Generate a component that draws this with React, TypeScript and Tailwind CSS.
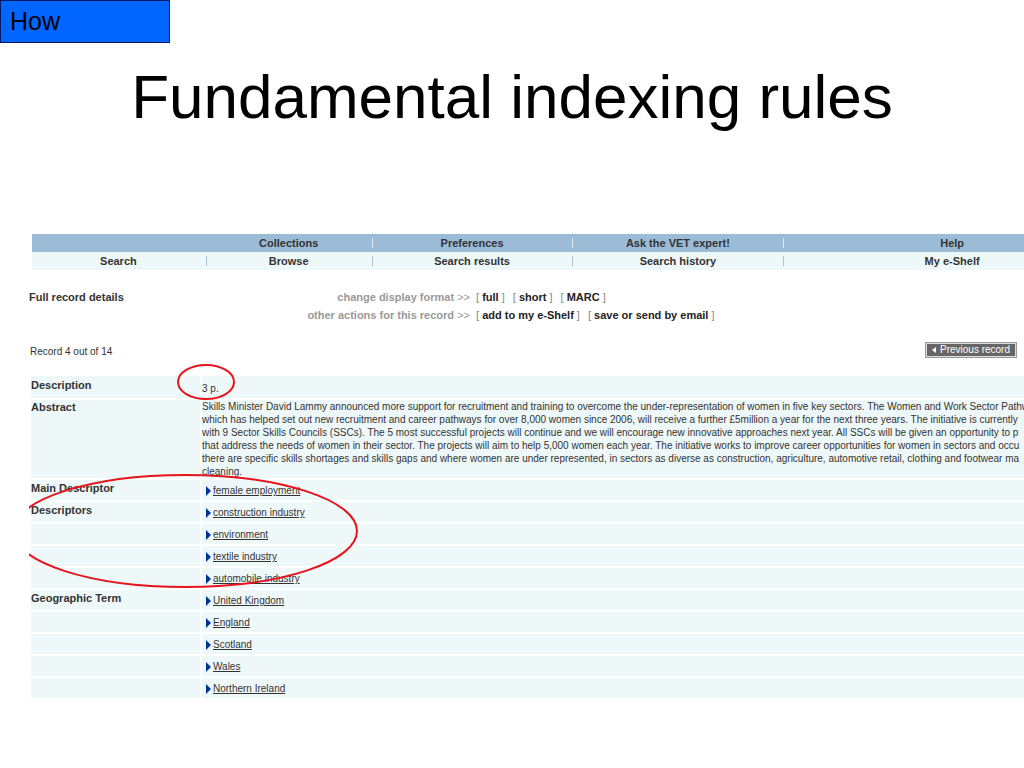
import { Fragment } from 'react';

const topNav = ['', 'Collections', 'Preferences', 'Ask the VET expert!', 'Help'];
const subNav = ['Search', 'Browse', 'Search results', 'Search history', 'My e-Shelf'];

const actions = [
  { label: 'change display format', options: ['full', 'short', 'MARC'] },
  { label: 'other actions for this record', options: ['add to my e-Shelf', 'save or send by email'] },
];

const terms = [
  { label: 'Main Descriptor', value: 'female employment' },
  { label: 'Descriptors', value: 'construction industry' },
  { label: '', value: 'environment' },
  { label: '', value: 'textile industry' },
  { label: '', value: 'automobile industry' },
  { label: 'Geographic Term', value: 'United Kingdom' },
  { label: '', value: 'England' },
  { label: '', value: 'Scotland' },
  { label: '', value: 'Wales' },
  { label: '', value: 'Northern Ireland' },
];

const NavRow = ({ items, className, divider }: { items: string[]; className: string; divider: string }) => (
  <div className={`grid h-[18px] grid-cols-[175fr_166fr_201fr_211fr_240fr] items-center text-center ${className}`}>
    {items.map((item, i) => (
      <div key={i} className={`relative whitespace-nowrap ${i === 4 ? 'pl-24' : 'pr-0.5'}`}>
        {item ? <a href="#">{item}</a> : <span>&nbsp;</span>}
        {i < 4 && item && <span className={`absolute right-0 top-1 h-2.5 w-px ${divider}`} />}
      </div>
    ))}
  </div>
);

const App = () => {
  return (
    <div className="min-h-screen overflow-hidden bg-white pb-16 font-['Liberation_Sans',Arial,sans-serif] text-black">
      <div className="h-[43px] w-[170px] border border-[#001a66] bg-[#0066ff] pl-[9px] text-[25px] leading-[41px]">
        How
      </div>

      <h1 className="mt-4 text-center text-[62px] leading-[76px]">Fundamental indexing rules</h1>

      <div className="mt-[99px] ml-[31px] text-[11px] text-[#333]">
        {/* Navigation */}
        <nav className="ml-px font-bold leading-[18px]">
          <NavRow items={topNav} className="bg-[#9bbbd6]" divider="bg-[#dceaf3]" />
          <NavRow items={subNav} className="bg-[#eef8f9]" divider="bg-[#a9c3d3]" />
        </nav>

        {/* Record actions */}
        <div className="-ml-0.5 mt-[18px] flex leading-[18px]">
          <h2 className="w-[200px] font-bold">Full record details</h2>
          <div className="grid grid-cols-[241px_1fr] gap-x-1.5">
            {actions.map((action) => (
              <Fragment key={action.label}>
                <div className="whitespace-nowrap text-right font-bold text-[#999]">
                  {action.label} <span className="font-normal">&gt;&gt;</span>
                </div>
                <div className="flex gap-2 whitespace-nowrap text-[#888]">
                  {action.options.map((option) => (
                    <span key={option}>
                      [ <a href="#" className="font-bold text-[#222]">{option}</a> ]
                    </span>
                  ))}
                </div>
              </Fragment>
            ))}
          </div>
        </div>

        <div className="-ml-px mr-[7px] mt-4 flex items-center justify-between text-[10px]">
          <span className="pt-1">Record 4 out of 14</span>
          <button className="flex h-4 w-[92px] items-center justify-center gap-1 border border-[#999] bg-[#666] leading-3 text-white outline-1 -outline-offset-2 outline-[#ddd]">
            <svg width="4" height="6" viewBox="0 0 4 6" fill="currentColor">
              <path d="M4 0v6L0 3z" />
            </svg>
            <span className="whitespace-nowrap">Previous record</span>
          </button>
        </div>

        {/* Record table */}
        <div className="relative mt-[15px]">
          <table className="-mx-0.5 w-[calc(100%+4px)] table-fixed border-separate border-spacing-0.5 text-left leading-[13px]">
            <colgroup>
              <col className="w-[169px]" />
              <col />
            </colgroup>
            <tbody>
              <tr className="h-[22px] bg-[#eef8f9] align-top">
                <th className="pt-[3px]">Description</th>
                <td className="pt-1.5 text-[10px]">3 p.</td>
              </tr>
              <tr className="h-[78px] bg-[#eef8f9] align-top">
                <th className="pt-px">Abstract</th>
                <td className="overflow-hidden whitespace-nowrap text-[10px]">
                  Skills Minister David Lammy announced more support for recruitment and training to overcome the under-representation of women in five key sectors. The Women and Work Sector Pathw<br />
                  which has helped set out new recruitment and career pathways for over 8,000 women since 2006, will receive a further £5million a year for the next three years. The initiative is currently<br />
                  with 9 Sector Skills Councils (SSCs). The 5 most successful projects will continue and we will encourage new innovative approaches next year. All SSCs will be given an opportunity to p<br />
                  that address the needs of women in their sector. The projects will aim to help 5,000 women each year. The initiative works to improve career opportunities for women in sectors and occu<br />
                  there are specific skills shortages and skills gaps and where women are under represented, in sectors as diverse as construction, agriculture, automotive retail, clothing and footwear ma<br />
                  cleaning.
                </td>
              </tr>
              {terms.map((term) => (
                <tr key={term.value} className="h-5 bg-[#eef8f9] align-top">
                  <th className="pt-0.5">{term.label}</th>
                  <td className="pl-1 pt-1 text-[10px]">
                    <span className="flex items-center gap-0.5">
                      <svg width="5" height="10" viewBox="0 0 5 10" className="fill-[#003399]">
                        <path d="M0 0l5 5-5 5z" />
                      </svg>
                      <a href="#" className="underline">{term.value}</a>
                    </span>
                  </td>
                </tr>
              ))}
            </tbody>
          </table>

          {/* Highlight rings */}
          <svg
            className="pointer-events-none absolute -left-0.5 -top-3 h-[240px] w-[340px] overflow-hidden"
            viewBox="29 362 340 240"
            fill="none"
            stroke="#e8141c"
            strokeWidth="2"
          >
            <ellipse cx="206" cy="382" rx="28" ry="17" />
            <ellipse cx="185" cy="531" rx="172" ry="56" />
          </svg>
        </div>
      </div>
    </div>
  );
};

export default App;
